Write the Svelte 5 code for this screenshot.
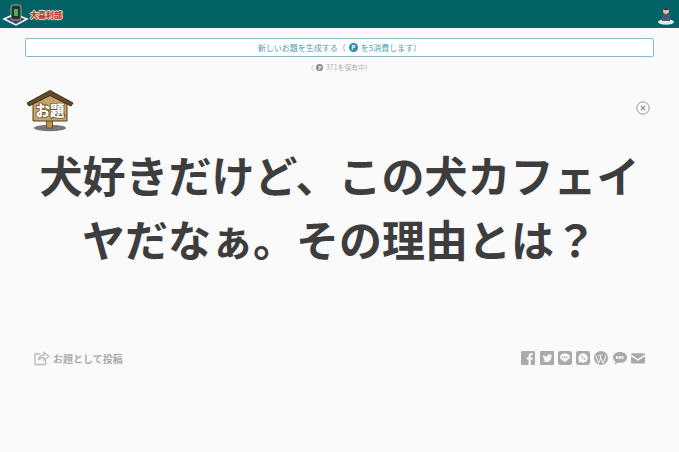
<script>
  const shares = ['fb', 'tw', 'line', 'wa', 'wp', 'sms', 'mail'];
</script>

<header class="topbar">
  <div class="logo">
    <svg width="27" height="25" viewBox="0 0 27 25">
      <path d="M2 17 L13 12 L25 17 L14 23 Z" fill="#4a3a6e" stroke="#fff" stroke-width="1.500" />
      <rect x="9" y="3" width="10" height="15" rx="2" fill="#1f3a2c" stroke="#cfd8d0" stroke-width=".7" />
      <rect x="12" y="7" width="4" height="7" fill="#57a85c" />
    </svg>
    <span class="logo-text">大喜利部</span>
  </div>
  <svg class="avatar" width="18" height="22" viewBox="0 0 18 22">
    <ellipse cx="9" cy="18" rx="8" ry="2.800" fill="#dfe9e8" />
    <path d="M5 17 L5 11 Q9 8 13 11 L13 17 Z" fill="#46587c" />
    <circle cx="9" cy="7" r="3" fill="#e9bd98" />
    <path d="M6 6 Q9 1.500 12 6 Z" fill="#27303c" />
  </svg>
</header>

<main class="page">
  <button class="generate">新しいお題を生成する（<span class="coin">P</span>を5消費します）</button>
  <p class="owned">（ <span class="coin small">P</span> 371を保有中）</p>

  <section class="card">
    <div class="card-top">
      <svg class="sign" width="48" height="44" viewBox="0 0 48 44">
        <ellipse cx="24" cy="39" rx="16" ry="3.200" fill="#777" />
        <rect x="20.500" y="30" width="6" height="9" fill="#c09248" stroke="#54401f" stroke-width=".8" />
        <path d="M7 12 L24 4 L41 12 V32 H7 Z" fill="#c9a468" stroke="#54401f" />
        <path d="M1 14 L24 1.500 L47 14 L45 17 L24 6.500 L3 17 Z" fill="#5f4c2a" stroke="#3b2e18" />
        <text x="24" y="27" class="sign-text">お題</text>
      </svg>
      <svg class="close" width="14" height="14" viewBox="0 0 14 14">
        <circle cx="7" cy="7" r="6.200" fill="none" stroke="#999" />
        <path d="M4.800 4.800 L9.200 9.200 M9.200 4.800 L4.800 9.200" stroke="#888" stroke-width="1.100" />
      </svg>
    </div>

    <h1>犬好きだけど、この犬カフェイヤだなぁ。その理由とは？</h1>

    <div class="actions">
      <div class="post">
        <svg width="16" height="16" viewBox="0 0 16 16" fill="none" stroke="#bbb" stroke-width="1.300">
          <path d="M11.500 10 V14.500 H1 V4 H6" />
          <path d="M4.500 10 Q5.500 5 10 5 V2.500 L15 6.500 L10 10 V7.500 Q6.500 7.500 4.500 10 Z" />
        </svg>
        <span>お題として投稿</span>
      </div>
      <div class="shares">
        {#each shares as s}
          <svg width="14" height="14" viewBox="0 0 13 13">
            {#if s === 'fb'}
              <path d="M1 0 H12 Q13 0 13 1 V12 Q13 13 12 13 H9 V8 H10.800 L11 6 H9 V4.800 Q9 3.800 10 3.800 H11 V2 H9.400 Q7 2 7 4.500 V6 H5.300 V8 H7 V13 H1 Q0 13 0 12 V1 Q0 0 1 0 Z" />
            {:else if s === 'tw'}
              <path fill-rule="evenodd" d="M1 0 H12 Q13 0 13 1 V12 Q13 13 12 13 H1 Q0 13 0 12 V1 Q0 0 1 0 Z M2.500 9.300 Q7 11.500 9.500 8.500 Q11 6.500 10.500 4.800 L11.300 3.800 L10.200 4 L10.900 3 L9.800 3.500 Q8.500 2.500 7.300 3.500 Q6.500 4.300 6.800 5.300 Q4.500 5.200 3 3.500 Q2.500 5 3.500 6 L2.800 5.800 Q3 7 4.200 7.500 L3.500 7.600 Q4 8.500 5 8.600 Q4 9.400 2.500 9.300 Z" />
            {:else if s === 'line'}
              <path fill-rule="evenodd" d="M2.500 0 H10.500 Q13 0 13 2.500 V10.500 Q13 13 10.500 13 H2.500 Q0 13 0 10.500 V2.500 Q0 0 2.500 0 Z M6.500 2.300 Q2 2.300 2 5.800 Q2 8.500 5.500 9.200 Q6 9.400 5.700 10.500 Q8 9.500 10 7.500 Q11 6.500 11 5.800 Q11 2.300 6.500 2.300 Z" />
              <path d="M3.800 5.800 H9.200" stroke="#aaa" stroke-width="1.600" stroke-dasharray="1.100 .6" />
            {:else if s === 'wa'}
              <path fill-rule="evenodd" d="M2 0 H11 Q13 0 13 2 V11 Q13 13 11 13 H2 Q0 13 0 11 V2 Q0 0 2 0 Z M6.500 2.200 A4.300 4.300 0 0 0 2.800 8.700 L2.200 10.800 L4.400 10.200 A4.300 4.300 0 1 0 6.500 2.200 Z" />
              <path d="M4.800 4.500 Q5.300 7.500 8.500 8.300 L9 7.300 L7.900 6.700 L7.300 7.200 Q6.300 6.700 5.900 5.700 L6.200 5.200 L5.600 4.200 Z" />
            {:else if s === 'wp'}
              <circle cx="6.500" cy="6.500" r="6.500" />
              <path d="M1.800 4.300 L4.300 11.500 L6.300 6.300 L5.500 3.900 M4.300 3.900 H7.300 M6.300 6.300 L8.300 11.500 L10.700 5.700 Q11 4.300 9.800 3.800" fill="none" stroke="#fafafa" stroke-width=".9" />
            {:else if s === 'sms'}
              <path d="M6.500 1 C10.500 1 13 3.200 13 6 C13 8.800 10.500 11 6.500 11 Q5.500 11 4.500 10.800 L1.500 12.500 L2.300 9.800 Q0 8.300 0 6 C0 3.200 2.500 1 6.500 1 Z" />
              <path d="M2.800 6 H10.200" stroke="#fafafa" stroke-width="2.400" stroke-dasharray="2 .5" />
            {:else}
              <path d="M0 3.200 Q0 2 1.200 2 H11.800 Q13 2 13 3.200 L6.500 7.500 Z M0 4.800 L6.500 9 L13 4.800 V10.500 Q13 11.500 12 11.500 H1 Q0 11.500 0 10.500 Z" />
            {/if}
          </svg>
        {/each}
      </div>
    </div>
  </section>
</main>

<style>
  :global(body) {
    background: #fafafa;
    font-family: "Noto Sans CJK JP", "Noto Sans", sans-serif;
  }
  .topbar {
    height: 28px;
    background: #036265;
    display: flex;
    align-items: center;
    justify-content: space-between;
    padding: 0 4px 0 2px;
  }
  .logo {
    display: flex;
    align-items: center;
    gap: 1px;
  }
  .logo-text {
    font-size: 8px;
    font-weight: 900;
    color: #c23a2a;
    line-height: 11px;
    text-shadow: 1px 0 #efe3cf, -1px 0 #efe3cf, 0 1px #efe3cf, 0 -1px #efe3cf;
  }
  .avatar {
    margin-top: 1px;
  }
  .page {
    padding: 10px 25px 0;
  }
  .generate {
    display: flex;
    align-items: center;
    justify-content: center;
    width: 100%;
    height: 19px;
    box-sizing: border-box;
    padding: 0;
    background: #fff;
    border: 1px solid #84bccb;
    border-radius: 2px;
    color: #4c9cb0;
    font-family: inherit;
    font-size: 8px;
  }
  .coin {
    display: inline-flex;
    align-items: center;
    justify-content: center;
    width: 9px;
    height: 9px;
    margin: 0 3px;
    border-radius: 50%;
    background: #3189b0;
    color: #fff;
    font-size: 6px;
    font-weight: 700;
    line-height: 1;
  }
  .owned {
    margin: 5px 0 0;
    text-align: center;
    color: #b0b0b0;
    font-size: 6.900px;
    line-height: 10px;
  }
  .coin.small {
    width: 7px;
    height: 7px;
    margin: 0 1px;
    background: #888;
    font-size: 5px;
  }
  .card {
    padding: 0 1px;
  }
  .card-top {
    display: flex;
    justify-content: space-between;
    align-items: flex-start;
    margin-top: 17px;
  }
  .sign {
    display: block;
  }
  .sign-text {
    font-size: 14.500px;
    font-weight: 900;
    fill: #fff;
    stroke: #5f4c2a;
    stroke-width: 1.500px;
    paint-order: stroke;
    text-anchor: middle;
  }
  .close {
    margin: 12px 3px 0 0;
  }
  h1 {
    margin: 9px 0 0;
    text-align: center;
    font-size: 43px;
    font-weight: 700;
    line-height: 64px;
    color: #3d3d3d;
  }
  .actions {
    display: flex;
    justify-content: space-between;
    align-items: center;
    margin-top: 80px;
    padding: 0 8px 0 8px;
  }
  .post {
    display: flex;
    align-items: center;
    gap: 3px;
    color: #aaa;
    font-size: 10px;
    font-weight: 700;
  }
  .shares {
    display: flex;
    gap: 4.300px;
    align-items: center;
    fill: #aaa;
  }
</style>
